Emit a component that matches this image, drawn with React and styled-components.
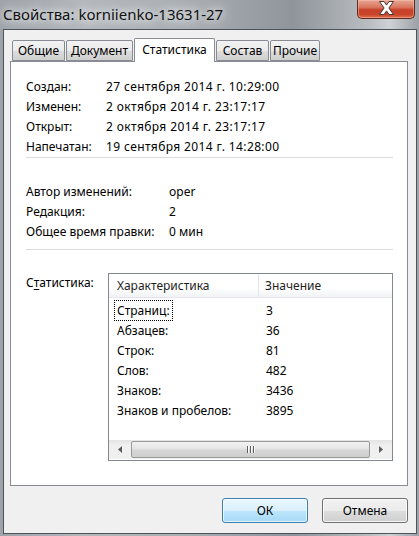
import React from 'react';
import styled, { createGlobalStyle } from 'styled-components';

const GlobalStyle = createGlobalStyle`
  html, body {
    margin: 0;
    padding: 0;
  }
  body {
    width: 419px;
    height: 536px;
    overflow: hidden;
    font-family: "Noto Sans", "Open Sans", sans-serif;
    font-size: 12px;
    color: #000;
  }
`;

const dates = [
  ['Создан:', '27 сентября 2014 г. 10:29:00'],
  ['Изменен:', '2 октября 2014 г. 23:17:17'],
  ['Открыт:', '2 октября 2014 г. 23:17:17'],
  ['Напечатан:', '19 сентября 2014 г. 14:28:00'],
];

const info = [
  ['Автор изменений:', 'oper'],
  ['Редакция:', '2'],
  ['Общее время правки:', '0 мин'],
];

const stats = [
  ['Страниц:', '3'],
  ['Абзацев:', '36'],
  ['Строк:', '81'],
  ['Слов:', '482'],
  ['Знаков:', '3436'],
  ['Знаков и пробелов:', '3895'],
];

const tabs = [
  { label: 'Общие', w: 53 },
  { label: 'Документ', w: 67 },
  { label: 'Статистика', w: 81, active: true },
  { label: 'Состав', w: 53 },
  { label: 'Прочие', w: 50 },
];

export default function App() {
  return (
    <>
      <GlobalStyle />
      <SWindow>
        <STitleBar>
          <STitle>Свойства: korniienko-13631-27</STitle>
          <SCloseBtn>
            <svg width="17" height="14" viewBox="0 0 17 14">
              <path
                d="M1.5 0.5h4.5l2.5 3.6L11 0.5h4.5l-4.6 6.5 4.6 6.5H11l-2.5-3.6L6 13.5H1.5l4.6-6.5z"
                fill="#fff"
                stroke="#4a3633"
                strokeWidth="1"
                strokeLinejoin="round"
              />
            </svg>
          </SCloseBtn>
        </STitleBar>

        <SClient>
          <STabStrip>
            {tabs.map(t => (
              <STab key={t.label} $w={t.w} $active={t.active}>
                {t.label}
              </STab>
            ))}
          </STabStrip>

          <SPanel>
            <SGroup $top={14}>
              {dates.map(([k, v]) => (
                <SRow key={k} $labelW={80} $spacing={0.38}>
                  <span>{k}</span>
                  <span>{v}</span>
                </SRow>
              ))}
            </SGroup>
            <SSeparator />

            <SGroup $top={23}>
              {info.map(([k, v]) => (
                <SRow key={k} $labelW={143}>
                  <span>{k}</span>
                  <span>{v}</span>
                </SRow>
              ))}
            </SGroup>
            <SSeparator $top={8} />

            <SStatsSection>
              <SStatsLabel>
                С<u>т</u>атистика:
              </SStatsLabel>
              <SListBox>
                <SHeader>
                  <SHeaderCell $w={150}>Характеристика</SHeaderCell>
                  <SHeaderCell>Значение</SHeaderCell>
                </SHeader>
                <SListBody>
                  {stats.map(([k, v], i) => (
                    <SListRow key={k}>
                      <SListKey>
                        <SFocus $focused={i === 0}>{k}</SFocus>
                      </SListKey>
                      <SListVal>{v}</SListVal>
                    </SListRow>
                  ))}
                </SListBody>
                <SScrollBar>
                  <SArrow>
                    <svg width="4" height="7" viewBox="0 0 4 7">
                      <path d="M4 0v7L0 3.5z" fill="#5c5c5c" />
                    </svg>
                  </SArrow>
                  <SThumb>
                    <SGrip />
                    <SGrip />
                    <SGrip />
                  </SThumb>
                  <SArrow>
                    <svg width="4" height="7" viewBox="0 0 4 7">
                      <path d="M0 0v7l4-3.5z" fill="#5c5c5c" />
                    </svg>
                  </SArrow>
                </SScrollBar>
              </SListBox>
            </SStatsSection>
          </SPanel>

          <SButtonRow>
            <SButton $primary>ОК</SButton>
            <SButton>Отмена</SButton>
          </SButtonRow>
        </SClient>
      </SWindow>
    </>
  );
}

const SWindow = styled.div`
  width: 419px;
  height: 536px;
  box-sizing: border-box;
  padding: 0 2px 2px 3px;
  display: flex;
  flex-direction: column;
  background: linear-gradient(
    to right,
    #9ea3a9 0%,
    #b4b8bd 20%,
    #a9aeb3 45%,
    #8f959b 70%,
    #b9bdc1 88%,
    #cfd2d5 93%,
    #9aa0a6 100%
  );
`;

const STitleBar = styled.div`
  height: 29px;
  display: flex;
  justify-content: space-between;
  align-items: flex-start;
  flex-shrink: 0;
`;

const STitle = styled.div`
  margin-top: 4px;
  font-size: 15px;
  line-height: 20px;
  color: #111;
  text-shadow: 0 0 6px #e4e6e8, 0 0 10px #dfe1e4, 0 0 14px #d9dcdf;
  white-space: nowrap;
`;

const SCloseBtn = styled.div`
  width: 58px;
  height: 19px;
  margin-right: 2px;
  box-sizing: border-box;
  border: 1px solid #5f2a22;
  border-top: none;
  border-radius: 0 0 5px 5px;
  display: flex;
  align-items: flex-start;
  justify-content: center;
  padding-top: 1px;
  background: linear-gradient(
    to bottom,
    #e7a796 0%,
    #d9775f 40%,
    #c64128 55%,
    #c8442a 80%,
    #e0714f 100%
  );
  box-shadow: inset 0 0 0 1px rgba(255, 200, 180, 0.45);
`;

const SClient = styled.div`
  flex: 1;
  border: 1px solid #4e5359;
  background: #f0f0f0;
  display: flex;
  flex-direction: column;
`;

const STabStrip = styled.div`
  margin: 8px 0 0 8px;
  height: 23px;
  display: flex;
  align-items: flex-end;
  position: relative;
  z-index: 1;
`;

const STab = styled.div`
  box-sizing: border-box;
  width: ${p => p.$w}px;
  height: ${p => (p.$active ? 24 : 21)}px;
  margin-bottom: ${p => (p.$active ? -1 : 0)}px;
  margin-right: 1px;
  border: 1px solid #898c95;
  border-bottom: ${p => (p.$active ? 'none' : '1px solid #898c95')};
  border-radius: 2px 2px 0 0;
  background: ${p =>
    p.$active ? '#fff' : 'linear-gradient(to bottom, #f2f2f2 0%, #ebebeb 50%, #dddddd 51%, #cfcfcf 100%)'};
  display: flex;
  align-items: center;
  justify-content: center;
  padding-bottom: ${p => (p.$active ? 3 : 0)}px;
  white-space: nowrap;
  color: #000;
`;

const SPanel = styled.div`
  box-sizing: border-box;
  height: 425px;
  margin: 0 8px 0 6px;
  border: 1px solid #898c95;
  background: #fff;
  padding: 0 14px 0 15px;
  display: flex;
  flex-direction: column;
`;

const SGroup = styled.div`
  margin-top: ${p => p.$top}px;
  display: flex;
  flex-direction: column;
`;

const SRow = styled.div`
  height: 20px;
  display: flex;
  align-items: center;
  white-space: nowrap;

  & > span:first-child {
    width: ${p => p.$labelW}px;
    flex-shrink: 0;
  }

  & > span:last-child {
    letter-spacing: ${p => p.$spacing || 0}px;
  }
`;

const SSeparator = styled.div`
  height: 1px;
  margin-top: ${p => p.$top || 1}px;
  background: #d9dcdf;
`;

const SStatsSection = styled.div`
  margin-top: 23px;
  display: flex;
  align-items: flex-start;
`;

const SStatsLabel = styled.div`
  width: 82px;
  height: 20px;
  line-height: 20px;

  u {
    text-decoration-thickness: 1px;
    text-underline-offset: 2px;
  }
`;

const SListBox = styled.div`
  box-sizing: border-box;
  width: 285px;
  height: 188px;
  border: 1px solid #828790;
  display: flex;
  flex-direction: column;
`;

const SHeader = styled.div`
  height: 23px;
  display: flex;
  background: linear-gradient(to bottom, #fff 0%, #fff 60%, #f1f2f4 100%);
  border-bottom: 1px solid #e5e7ea;
`;

const SHeaderCell = styled.div`
  box-sizing: border-box;
  width: ${p => (p.$w ? `${p.$w}px` : 'auto')};
  flex: ${p => (p.$w ? 'none' : 1)};
  padding-left: ${p => (p.$w ? 8 : 6)}px;
  border-right: ${p => (p.$w ? '1px solid #e3e5e8' : 'none')};
  display: flex;
  align-items: center;
  color: #1e1e1e;
`;

const SListBody = styled.div`
  flex: 1;
  padding-top: 2px;
`;

const SListRow = styled.div`
  height: 20px;
  display: flex;
  align-items: center;
`;

const SListKey = styled.div`
  width: 150px;
  padding-left: 5px;
  box-sizing: border-box;
`;

const SFocus = styled.span`
  display: inline-block;
  padding: 1px 2px;
  border: 1px dotted ${p => (p.$focused ? '#000' : 'transparent')};
  white-space: nowrap;
`;

const SListVal = styled.div`
  padding-left: 7px;
`;

const SScrollBar = styled.div`
  height: 19px;
  margin: 0 0 1px 0;
  display: flex;
  align-items: stretch;
  background: linear-gradient(to bottom, #e3e3e3 0%, #f0f0f0 30%, #f0f0f0 100%);
`;

const SArrow = styled.div`
  width: 22px;
  display: flex;
  align-items: center;
  justify-content: center;
`;

const SThumb = styled.div`
  flex: 1;
  margin: 1px 0;
  box-sizing: border-box;
  border: 1px solid #9a9a9a;
  border-radius: 2px;
  background: linear-gradient(to bottom, #f2f2f2 0%, #e4e4e4 45%, #d5d5d5 55%, #cfcfcf 100%);
  display: flex;
  align-items: center;
  justify-content: center;
  gap: 2px;
`;

const SGrip = styled.div`
  width: 1px;
  height: 7px;
  background: #5e5e5e;
  box-shadow: 1px 0 0 #fff;
`;

const SButtonRow = styled.div`
  display: flex;
  justify-content: flex-end;
  gap: 14px;
  margin: 12px 8px 0 0;
`;

const SButton = styled.div`
  box-sizing: border-box;
  width: 86px;
  height: 25px;
  border: 1px solid ${p => (p.$primary ? '#3c7fb1' : '#707070')};
  border-radius: 3px;
  display: flex;
  align-items: center;
  justify-content: center;
  background: ${p =>
    p.$primary
      ? 'linear-gradient(to bottom, #eaf6fd 0%, #d9f0fc 50%, #bee6fd 51%, #a7d9f5 100%)'
      : 'linear-gradient(to bottom, #f2f2f2 0%, #ebebeb 50%, #dddddd 51%, #cfcfcf 100%)'};
  box-shadow: inset 0 0 0 1px ${p => (p.$primary ? 'rgba(255,255,255,0.7)' : 'rgba(255,255,255,0.8)')};
  color: #000;
`;
